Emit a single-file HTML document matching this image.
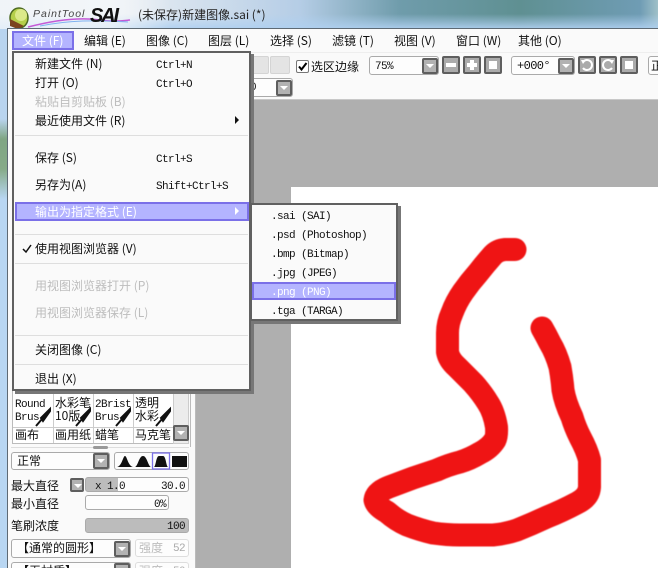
<!DOCTYPE html>
<html><head><meta charset="utf-8"><style>
html,body{margin:0;padding:0;width:658px;height:568px;overflow:hidden}
body{position:relative;background:#fff;font:12px/14px "WenQuanYi Zen Hei","Noto Sans CJK SC","Liberation Sans",sans-serif;color:#111}
div,span.a{position:absolute;box-sizing:border-box}
#w{left:0;top:0;width:658px;height:568px;overflow:hidden}
.t{position:absolute;white-space:nowrap;line-height:14px;font-size:12px}
.g{color:#bdbdbd}
.t.m{font-family:"Liberation Mono",monospace;font-size:11px;letter-spacing:-.6px;line-height:18px;transform:translateY(2px)}
.sh{font-family:"Liberation Mono",monospace;font-size:11px;letter-spacing:-.6px}
.sep{left:3px;width:233px;height:1px;background:#dedede}
.dd{width:16px;height:16px;background:#b2b2b2;border:2px solid #5e5e5e;border-radius:2px}
.dd:after{content:"";position:absolute;left:2px;top:4px;border-left:4px solid transparent;border-right:4px solid transparent;border-top:4px solid #fff}
.b{width:18px;height:18px;background:#ababab;border:2px solid #5e5e5e;border-radius:2px}
.box{background:#fdfdfd;border:1px solid #aaa;border-radius:3px}
</style></head><body><div id="w">
<!-- desktop/title background -->
<div style="left:0;top:0;width:658px;height:29px;background:linear-gradient(90deg,#dfe7ee 0,#e6ecf2 130px,#b5cde6 300px,#6f9cab 400px,#5f9092 520px,#6f9cb4 640px,#9fc0c8 658px)"></div>
<div style="left:0;top:14px;width:658px;height:15px;background:linear-gradient(180deg,rgba(170,205,240,0),rgba(175,208,240,.95))"></div>
<div style="left:0;top:0;width:170px;height:29px;background:linear-gradient(90deg,rgba(248,250,252,.7) 0,rgba(248,250,252,.7) 110px,rgba(248,250,252,0) 170px)"></div>
<div style="left:0;top:29px;width:8px;height:539px;background:linear-gradient(180deg,#b9d4ef 0,#b9d4ef 90px,#7fa583 110px,#86ab88 140px,#b8d6f2 170px,#b8d6f2 539px)"></div>
<!-- logo -->
<svg style="position:absolute;left:0;top:0" width="135" height="29">
<ellipse cx="19" cy="18" rx="9" ry="10" fill="#b5cf4b" stroke="#4d6a22" stroke-width="1.5"/>
<circle cx="21" cy="15" r="6" fill="#dbe98a"/>
<path d="M10 19 L24 26 L18 29 L10 26Z" fill="#7b4420"/>
<path d="M28 27 C55 20 80 17 100 20 C112 22 122 21 130 20" stroke="#c45ad6" stroke-width="1.5" fill="none"/>
<path d="M40 26 C70 20 95 20 128 22" stroke="#7fb2f0" stroke-width="1" fill="none"/>
<text x="33" y="17" font-family="Liberation Sans" font-style="italic" font-size="10.5" letter-spacing="1" fill="#444">PaintTool</text>
<text x="90" y="22" font-family="Liberation Sans" font-style="italic" font-weight="bold" font-size="20" fill="#111" textLength="29">SAI</text>
</svg>
<div class="t" style="left:138px;top:8px;color:#222">(未保存)新建图像.sai (*)</div>
<!-- app -->
<div style="left:7px;top:28px;width:651px;height:540px;background:#fafafa;border-left:1px solid #5e6a74;border-top:1px solid #5e6a74"></div>
<!-- menu bar -->
<div style="left:12px;top:31px;width:62px;height:19px;background:#b4b4ff;border:2px solid #7b70e8"></div>
<div class="t" style="left:22px;top:34px;color:#fff">文件 (F)</div>
<div class="t" style="left:84px;top:34px">编辑 (E)</div>
<div class="t" style="left:146px;top:34px">图像 (C)</div>
<div class="t" style="left:208px;top:34px">图层 (L)</div>
<div class="t" style="left:270px;top:34px">选择 (S)</div>
<div class="t" style="left:332px;top:34px">滤镜 (T)</div>
<div class="t" style="left:394px;top:34px">视图 (V)</div>
<div class="t" style="left:456px;top:34px">窗口 (W)</div>
<div class="t" style="left:518px;top:34px">其他 (O)</div>
<div style="left:8px;top:52px;width:650px;height:1px;background:#eee"></div>
<!-- toolbar -->
<div style="left:252px;top:56px;width:17px;height:18px;background:#e4e4e4;border:1px solid #d4d4d4;border-radius:2px"></div>
<div style="left:270px;top:56px;width:20px;height:18px;background:#e4e4e4;border:1px solid #d4d4d4;border-radius:2px"></div>
<div style="left:296px;top:60px;width:13px;height:13px;background:#fff;border:1px solid #777;border-radius:2px"></div>
<svg style="position:absolute;left:296px;top:60px" width="13" height="13"><path d="M3 6.5 L5.5 9.5 L10.5 3" stroke="#000" stroke-width="2" fill="none"/></svg>
<div class="t" style="left:311px;top:60px">选区边缘</div>
<div class="box" style="left:369px;top:56px;width:70px;height:19px"></div>
<div class="t sh" style="left:375px;top:60px">75%</div>
<div class="dd" style="left:422px;top:58px"></div>
<div class="b" style="left:442px;top:56px"></div><div style="left:446px;top:63px;width:10px;height:4px;background:#fff"></div>
<div class="b" style="left:463px;top:56px"></div><div style="left:467px;top:63px;width:10px;height:4px;background:#fff"></div><div style="left:470px;top:60px;width:4px;height:10px;background:#fff"></div>
<div class="b" style="left:484px;top:56px"></div><div style="left:489px;top:61px;width:8px;height:8px;background:#fff"></div>
<div class="box" style="left:511px;top:56px;width:64px;height:19px"></div>
<div class="t sh" style="left:517px;top:59px;font-size:12px">+000°</div>
<div class="dd" style="left:558px;top:58px"></div>
<div class="b" style="left:578px;top:56px"></div>
<svg style="position:absolute;left:578px;top:56px" width="18" height="18"><path d="M5 6 A5 5 0 1 1 5 12" stroke="#fff" stroke-width="2" fill="none"/><path d="M3 4 L8 4 L5 8Z" fill="#fff"/></svg>
<div class="b" style="left:599px;top:56px"></div>
<svg style="position:absolute;left:599px;top:56px" width="18" height="18"><path d="M13 6 A5 5 0 1 0 13 12" stroke="#fff" stroke-width="2" fill="none"/><path d="M15 4 L10 4 L13 8Z" fill="#fff"/></svg>
<div class="b" style="left:620px;top:56px"></div><div style="left:625px;top:61px;width:8px;height:8px;background:#fff"></div>
<div class="box" style="left:648px;top:56px;width:14px;height:19px"></div>
<div class="t" style="left:651px;top:59px">正</div>
<div class="box" style="left:240px;top:78px;width:53px;height:19px"></div>
<div class="t sh" style="left:250px;top:81px">0</div>
<div class="dd" style="left:276px;top:80px"></div>
<div style="left:196px;top:99px;width:462px;height:1px;background:#c8c8c8"></div>
<!-- canvas -->
<div style="left:196px;top:100px;width:462px;height:468px;background:#afafaf"></div>
<div style="left:291px;top:187px;width:367px;height:381px;background:#fff"></div>
<svg style="position:absolute;left:291px;top:187px;filter:blur(.6px)" width="367" height="381" viewBox="291 187 367 381">
<path d="M515 249.5 L505 249.5 Q498 250 493 255 Q485 264 478 273 Q470 282 463 292 Q456 302 452 313 Q447.5 323 447.5 333 L447.5 352 Q449 360 457 367 L473 383 Q482 393 488 403 Q494 412 496.5 427 Q497 436 495 440 Q490 448 480 453 Q470 459 460 462 Q448 465 437 470 Q425 474 413 478 L389 487 Q376 492 375 500 Q376 506 387 512 Q396 520 407 525 Q420 530 433 533 Q447 535 460 535 L493 535 Q505 534 517 530 Q532 524 547 517 Q562 511 577 503 Q589 497 589.5 487 L589.5 460 Q587 450 580 437 Q575 427 572 417 Q565 402 563 390 Q562 378 560 367 Q556 353 550 343 Q546 335 542 328" fill="none" stroke="#ef1414" stroke-width="23" stroke-linecap="round" stroke-linejoin="round"/>
</svg>
<!-- left panel -->
<div style="left:8px;top:52px;width:188px;height:516px;background:#fafafa;border-right:1px solid #bbb"></div>
<div style="left:190px;top:52px;width:1px;height:395px;background:#bbb"></div>
<div style="left:12px;top:388px;width:162px;height:56px;background:#fff;border:1px solid #bbb"></div>
<div style="left:173px;top:388px;width:16px;height:56px;background:#ececec;border:1px solid #ccc"></div>
<div class="dd" style="left:173px;top:425px"></div>
<div style="left:53px;top:388px;width:1px;height:55px;background:#ccc"></div>
<div style="left:93px;top:388px;width:1px;height:55px;background:#ccc"></div>
<div style="left:133px;top:388px;width:1px;height:55px;background:#ccc"></div>
<div style="left:13px;top:427px;width:160px;height:1px;background:#ccc"></div>
<div class="t m" style="left:15px;top:394px">Round</div><div class="t m" style="left:15px;top:407px">Brus</div>
<div class="t" style="left:55px;top:396px">水彩笔</div><div class="t" style="left:55px;top:409px">10版</div>
<div class="t m" style="left:95px;top:394px">2Brist</div><div class="t m" style="left:95px;top:407px">Brus</div>
<div class="t" style="left:135px;top:396px">透明</div><div class="t" style="left:135px;top:409px">水彩</div>
<svg style="position:absolute;left:0;top:0;pointer-events:none" width="196" height="440">
<path d="M41 418 L50 409 L50 411 L43 421Z" fill="#111" stroke="#111" stroke-width="2"/><path d="M42 419 L36 426" stroke="#111" stroke-width="2"/>
<path d="M81 418 L90 409 L90 411 L83 421Z" fill="#111" stroke="#111" stroke-width="2"/><path d="M82 419 L76 426" stroke="#111" stroke-width="2"/>
<path d="M121 418 L130 409 L130 411 L123 421Z" fill="#111" stroke="#111" stroke-width="2"/><path d="M122 419 L116 426" stroke="#111" stroke-width="2"/>
<path d="M161 418 L170 409 L170 411 L163 421Z" fill="#111" stroke="#111" stroke-width="2"/><path d="M162 419 L156 426" stroke="#111" stroke-width="2"/>
</svg>
<div class="t" style="left:15px;top:428px">画布</div>
<div class="t" style="left:55px;top:428px">画用纸</div>
<div class="t" style="left:95px;top:428px">蜡笔</div>
<div class="t" style="left:135px;top:428px">马克笔</div>
<div style="left:11px;top:447px;width:178px;height:1px;background:#ddd"></div>
<div style="left:93px;top:446px;width:15px;height:3px;background:#999;border-radius:2px"></div>
<div class="box" style="left:11px;top:452px;width:99px;height:18px"></div>
<div class="t" style="left:17px;top:454px">正常</div>
<div class="dd" style="left:93px;top:453px"></div>
<div class="box" style="left:114px;top:452px;width:75px;height:18px"></div>
<svg style="position:absolute;left:114px;top:452px" width="75" height="18">
<path d="M3 15 C8 14 9 4 11 4 C13 4 14 14 19 15Z" fill="#111"/>
<path d="M21 15 C24 14 25 4 29 4 C33 4 34 14 37 15Z" fill="#111"/>
<rect x="38.5" y="1" width="17" height="16" fill="none" stroke="#7b70e8" stroke-width="1.3"/>
<path d="M40 15 C42 14 42 4 45 4 L49 4 C52 4 52 14 54 15Z" fill="#111"/>
<rect x="58" y="4" width="15" height="11" fill="#111"/>
</svg>
<div class="t" style="left:11px;top:479px">最大直径</div>
<div class="dd" style="left:70px;top:478px;width:14px;height:14px"></div>
<div class="box" style="left:85px;top:477px;width:104px;height:15px;background:linear-gradient(90deg,#bcbcbc 32px,#fdfdfd 32px)"></div>
<div class="t m" style="left:95px;top:476px">x 1.0</div>
<div class="t m" style="left:160px;top:476px;width:25px;text-align:right">30.0</div>
<div class="t" style="left:11px;top:497px">最小直径</div>
<div class="box" style="left:85px;top:495px;width:84px;height:15px"></div>
<div class="t m" style="left:140px;top:494px;width:26px;text-align:right">0%</div>
<div class="t" style="left:11px;top:519px">笔刷浓度</div>
<div class="box" style="left:85px;top:518px;width:104px;height:15px;background:#bcbcbc"></div>
<div class="t m" style="left:160px;top:516px;width:25px;text-align:right">100</div>
<div class="box" style="left:11px;top:539px;width:120px;height:19px"></div>
<div class="t" style="left:17px;top:541px">【通常的圆形】</div>
<div class="dd" style="left:114px;top:541px"></div>
<div class="box" style="left:135px;top:539px;width:54px;height:18px;border-color:#ddd"></div>
<div class="t g" style="left:139px;top:541px">强度</div>
<div class="t m g" style="left:165px;top:538px;width:20px;text-align:right;color:#aaa">52</div>
<div class="box" style="left:11px;top:562px;width:120px;height:19px"></div>
<div class="t" style="left:17px;top:564px">【无材质】</div>
<div class="dd" style="left:114px;top:563px"></div>
<div class="box" style="left:135px;top:562px;width:54px;height:18px;border-color:#ddd"></div>
<div class="t g" style="left:139px;top:564px">强度</div>
<div class="t m g" style="left:165px;top:561px;width:20px;text-align:right;color:#aaa">50</div>
<!-- file menu -->
<div style="left:12px;top:51px;width:239px;height:340px;background:#fafafa;border:2px solid #606060;box-shadow:3px 3px 0 #777"></div>
<div class="sep" style="left:15px;top:135px"></div>
<div class="sep" style="left:15px;top:234px"></div>
<div class="sep" style="left:15px;top:263px"></div>
<div class="sep" style="left:15px;top:335px"></div>
<div class="sep" style="left:15px;top:364px"></div>
<div style="left:15px;top:202px;width:234px;height:19px;background:#b4b4ff;border:2px solid #7b70e8"></div>
<div class="t" style="left:35px;top:57px">新建文件 (N)</div><div class="t m" style="left:156px;top:55px">Ctrl+N</div>
<div class="t" style="left:35px;top:76px">打开 (O)</div><div class="t m" style="left:156px;top:74px">Ctrl+O</div>
<div class="t g" style="left:35px;top:95px">粘贴自剪贴板 (B)</div>
<div class="t" style="left:35px;top:114px">最近使用文件 (R)</div>
<div style="left:235px;top:116px;border-left:4px solid #111;border-top:4px solid transparent;border-bottom:4px solid transparent"></div>
<div class="t" style="left:35px;top:151px">保存 (S)</div><div class="t m" style="left:156px;top:149px">Ctrl+S</div>
<div class="t" style="left:35px;top:178px">另存为(A)</div><div class="t m" style="left:156px;top:176px">Shift+Ctrl+S</div>
<div class="t" style="left:35px;top:205px;color:#fff">输出为指定格式 (E)</div>
<div style="left:235px;top:207px;border-left:4px solid #fff;border-top:4px solid transparent;border-bottom:4px solid transparent"></div>
<svg style="position:absolute;left:22px;top:244px" width="10" height="10"><path d="M1 5 L4 8 L9 1" stroke="#111" stroke-width="1.5" fill="none"/></svg>
<div class="t" style="left:35px;top:242px">使用视图浏览器 (V)</div>
<div class="t g" style="left:35px;top:279px">用视图浏览器打开 (P)</div>
<div class="t g" style="left:35px;top:306px">用视图浏览器保存 (L)</div>
<div class="t" style="left:35px;top:343px">关闭图像 (C)</div>
<div class="t" style="left:35px;top:372px">退出 (X)</div>
<!-- submenu -->
<div style="left:250px;top:203px;width:148px;height:118px;background:#fafafa;border:2px solid #606060;box-shadow:3px 3px 0 #777"></div>
<div style="left:252px;top:282px;width:144px;height:18px;background:#b4b4ff;border:2px solid #7b70e8"></div>
<div class="t m" style="left:271px;top:206px">.sai (SAI)</div>
<div class="t m" style="left:271px;top:225px">.psd (Photoshop)</div>
<div class="t m" style="left:271px;top:244px">.bmp (Bitmap)</div>
<div class="t m" style="left:271px;top:263px">.jpg (JPEG)</div>
<div class="t m" style="left:271px;top:282px;color:#fff">.png (PNG)</div>
<div class="t m" style="left:271px;top:301px">.tga (TARGA)</div>
</div></body></html>
